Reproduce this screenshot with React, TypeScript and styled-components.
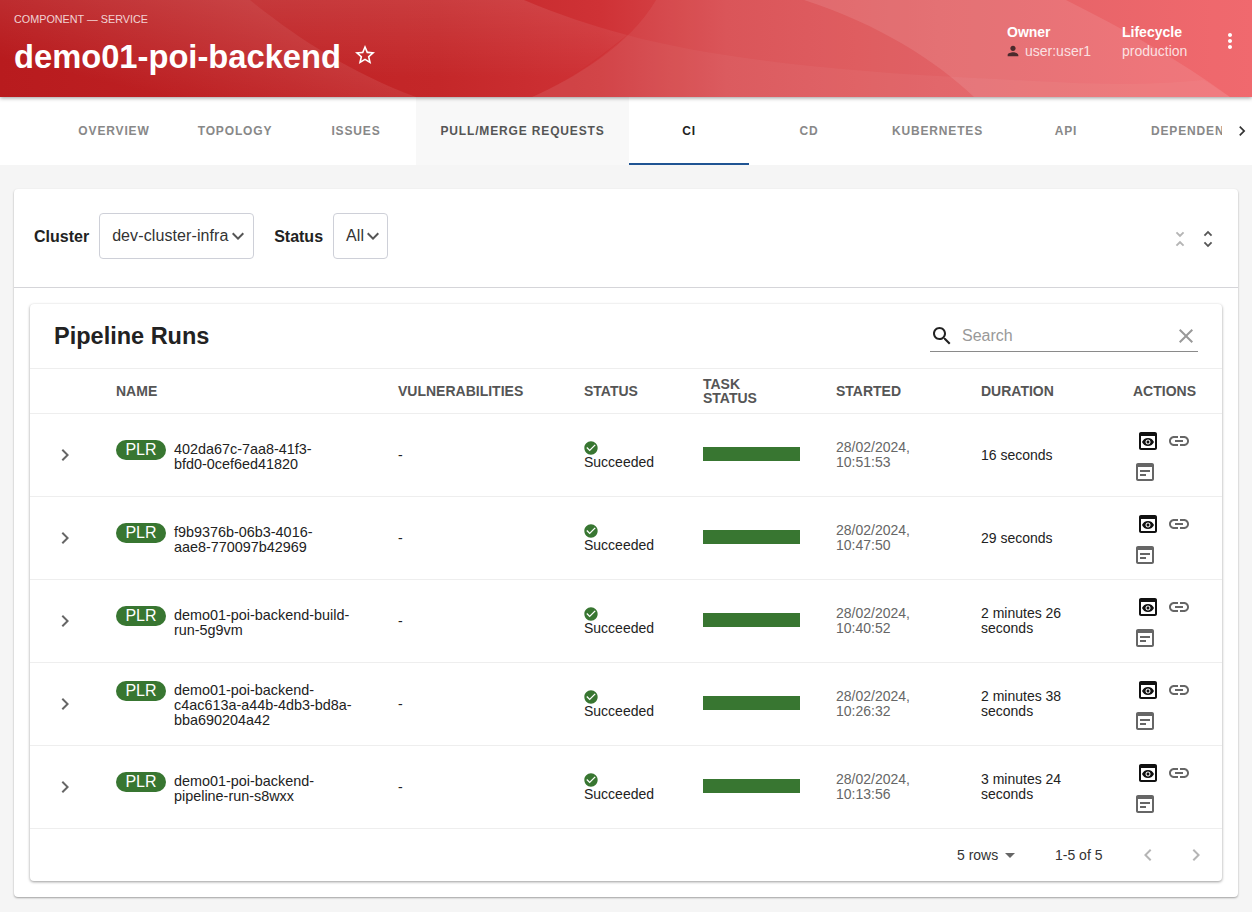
import React from 'react'
import styled, { createGlobalStyle } from 'styled-components'

const GlobalStyle = createGlobalStyle`
  html, body {
    margin: 0;
    padding: 0;
    height: 912px;
    overflow: hidden;
    background: #f5f5f5;
    font-family: "Liberation Sans", Arial, sans-serif;
  }
  * { box-sizing: border-box; }
`

const Page = styled.div`
  width: 1252px;
  height: 912px;
  display: flex;
  flex-direction: column;
`

const HeaderBar = styled.header`
  position: relative;
  height: 97px;
  flex: none;
  display: flex;
  justify-content: space-between;
  padding: 0 10px 0 14px;
  color: #fff;
  background: linear-gradient(90deg, #b81b1e 0%, #c42729 35%, #cf3236 48%, #d84b4f 58%, #e0585c 75%, #f06065 100%);
  box-shadow: 0 1px 4px rgba(0, 0, 0, 0.4);
  z-index: 2;
`

const Waves = styled.svg`
  position: absolute;
  left: 0;
  top: 0;
  width: 1252px;
  height: 97px;
`

const TitleBlock = styled.div`
  position: relative;
  padding-top: 12px;
`

const TypeLabel = styled.div`
  font-size: 10.8px;
  line-height: 14px;
  color: rgba(255, 255, 255, 0.8);
`

const TitleRow = styled.div`
  display: flex;
  align-items: center;
  gap: 12px;
  margin-top: 7px;
`

const Title = styled.h1`
  margin: 0;
  font-size: 32.7px;
  line-height: 48px;
  font-weight: 700;
`

const StarButton = styled.span`
  display: flex;
  margin-top: -4px;
`

const MetaBlock = styled.div`
  position: relative;
  display: flex;
  padding-top: 24px;
`

const Meta = styled.div<{ $width: number }>`
  width: ${p => p.$width}px;
`

const MetaLabel = styled.div`
  font-size: 14px;
  line-height: 16px;
  font-weight: 700;
`

const MetaValue = styled.div`
  display: flex;
  align-items: center;
  gap: 4px;
  height: 16px;
  margin-top: 3px;
  font-size: 14px;
  line-height: 16px;
  color: rgba(255, 255, 255, 0.8);
`

const OwnerIcon = styled.span`
  display: flex;
  margin-left: -2px;
`

const MoreButton = styled.div`
  width: 24px;
  margin-top: 5px;
`

const TabBar = styled.nav`
  height: 68px;
  flex: none;
  display: flex;
  background: #fff;
`

const TabScroller = styled.div`
  width: 1222px;
  padding-left: 54px;
  display: flex;
  overflow: hidden;
`

const Tab = styled.div<{ $width: number; $active?: boolean; $hover?: boolean }>`
  flex: none;
  width: ${p => p.$width}px;
  padding: 2px 24px 0;
  display: flex;
  align-items: center;
  justify-content: center;
  font-size: 12px;
  font-weight: 700;
  letter-spacing: 0.85px;
  white-space: nowrap;
  text-transform: uppercase;
  color: ${p => (p.$active ? '#222' : p.$hover ? '#555' : '#888')};
  background: ${p => (p.$hover ? '#f8f8f8' : 'transparent')};
  border-bottom: 2px solid ${p => (p.$active ? '#1f5493' : 'transparent')};
`

const ClippedTab = styled(Tab)`
  justify-content: flex-start;
  overflow: hidden;
  padding-left: 25px;
`

const TabArrow = styled.div`
  flex: 1;
  display: flex;
  align-items: center;
  justify-content: flex-end;
`

const Content = styled.main`
  flex: 1;
  padding: 24px 14px 15px;
`

const Card = styled.section`
  height: 708px;
  background: #fff;
  border-radius: 4px;
  box-shadow: 0 1px 2px rgba(0, 0, 0, 0.35);
`

const FilterRow = styled.div`
  height: 99px;
  display: flex;
  align-items: center;
  padding: 0 20px 2px;
  border-bottom: 1px solid #d5d5d9;
`

const FilterLabel = styled.label`
  font-size: 16px;
  font-weight: 700;
  color: #222;
  margin-right: 10px;
`

const SelectBox = styled.div<{ $width: number }>`
  width: ${p => p.$width}px;
  height: 46px;
  margin: 0 20px 2px 0;
  padding-left: 12px;
  display: flex;
  align-items: center;
  border: 1px solid #ced0d8;
  border-radius: 4px;
  font-size: 16px;
  letter-spacing: 0.1px;
  color: #333;
`

const SelectArrow = styled.span`
  display: flex;
  margin-left: -3px;
`

const FoldIcons = styled.div`
  margin: 3px -1px 0 auto;
  display: flex;
  gap: 6px;
`

const TableCard = styled.div`
  margin: 16px 16px 0;
  height: 577px;
  border-radius: 4px;
  background: #fff;
  box-shadow: 0 1px 3px rgba(0, 0, 0, 0.4);
`

const TableTitleRow = styled.div`
  height: 65px;
  display: flex;
  align-items: center;
  justify-content: space-between;
  padding: 0 24px;
  border-bottom: 1px solid #eee;
`

const TableTitle = styled.h2`
  margin: 0;
  font-size: 23.5px;
  font-weight: 700;
  color: #222;
`

const SearchBox = styled.div`
  width: 268px;
  height: 32px;
  display: flex;
  align-items: center;
  gap: 8px;
  border-bottom: 1px solid #8a8a8a;
  font-size: 16px;
  color: #999;
`

const SearchText = styled.span`
  flex: 1;
`

const columns = '70px 282px 186px 119px 133px 145px 152px 105px'

const HeadRow = styled.div`
  display: grid;
  grid-template-columns: ${columns};
  height: 45px;
  align-items: center;
  border-bottom: 1px solid #eee;
`

const HeadCell = styled.div`
  padding: 0 16px;
  font-size: 14px;
  line-height: 14px;
  font-weight: 700;
  color: #555;
  text-transform: uppercase;
  white-space: pre-line;
`

const Row = styled.div`
  display: grid;
  grid-template-columns: ${columns};
  height: 83px;
  align-items: center;
  border-bottom: 1px solid #eee;
`

const Cell = styled.div<{ $muted?: boolean }>`
  padding: 0 16px;
  font-size: 14px;
  line-height: 15px;
  color: ${p => (p.$muted ? '#666' : '#222')};
`

const ExpandCell = styled(Cell)`
  padding: 0 0 0 23px;
  display: flex;
`

const NameCell = styled(Cell)`
  display: flex;
  gap: 8px;
  align-items: flex-start;
  padding-top: 3px;
`

const Pill = styled.span`
  flex: none;
  width: 50px;
  height: 20px;
  margin-top: -2px;
  border-radius: 10px;
  background: #387631;
  color: #fff;
  font-size: 16px;
  line-height: 20px;
  text-align: center;
`

const RunName = styled.span`
  font-size: 14.4px;
  white-space: pre-line;
`

const StatusCell = styled(Cell)`
  display: flex;
  flex-direction: column;
  align-items: flex-start;
  padding-bottom: 1px;
`

const StatusIcon = styled.span`
  display: flex;
  height: 15px;
  margin-left: -1px;
`

const ProgressBar = styled.div`
  height: 14px;
  width: 97px;
  margin: 0 0 2px 16px;
  background: #387631;
`

const ActionCell = styled(Cell)`
  display: flex;
  flex-wrap: wrap;
  width: 105px;
  row-gap: 7px;
  padding-top: 2px;
`

const ActionIcon = styled.span<{ $offset?: number }>`
  display: flex;
  width: 24px;
  height: 24px;
  margin-left: ${p => p.$offset ?? 0}px;
`

const Footer = styled.div`
  height: 52px;
  display: flex;
  align-items: center;
  padding-left: 927px;
  font-size: 14px;
  color: #333;
`

const RowsSelect = styled.span`
  display: flex;
  align-items: center;
  width: 98px;
`

const PageCount = styled.span`
  width: 81px;
`

const PageArrows = styled.span`
  display: flex;
  gap: 24px;
`

const Icon = ({ d, size = 24, color = 'currentColor' }: { d: string; size?: number; color?: string }) => (
  <svg width={size} height={size} viewBox="0 0 24 24" fill={color} style={{ flex: 'none' }}>
    <path d={d} />
  </svg>
)

const paths = {
  star: 'M22 9.24l-7.19-.62L12 2 9.19 8.63 2 9.24l5.46 4.73L5.82 21 12 17.27 18.18 21l-1.63-7.03L22 9.24zM12 15.4l-3.76 2.27 1-4.28-3.32-2.88 4.38-.38L12 6.1l1.71 4.04 4.38.38-3.32 2.88 1 4.28L12 15.4z',
  person: 'M12 12c2.21 0 4-1.79 4-4s-1.79-4-4-4-4 1.79-4 4 1.79 4 4 4zm0 2c-2.67 0-8 1.34-8 4v2h16v-2c0-2.66-5.33-4-8-4z',
  more: 'M12 8c1.1 0 2-.9 2-2s-.9-2-2-2-2 .9-2 2 .9 2 2 2zm0 2c-1.1 0-2 .9-2 2s.9 2 2 2 2-.9 2-2-.9-2-2-2zm0 6c-1.1 0-2 .9-2 2s.9 2 2 2 2-.9 2-2-.9-2-2-2z',
  right: 'M10 6 8.59 7.41 13.17 12l-4.58 4.59L10 18l6-6z',
  left: 'M15.41 7.41 14 6l-6 6 6 6 1.41-1.41L10.83 12z',
  down: 'M7.41 8.59 12 13.17l4.59-4.58L18 10l-6 6-6-6z',
  less: 'M7.41 18.59 8.83 20 12 16.83 15.17 20l1.41-1.41L12 14l-4.59 4.59zm9.18-13.18L15.17 4 12 7.17 8.83 4 7.41 5.41 12 10l4.59-4.59z',
  more2: 'M12 5.83 15.17 9l1.41-1.41L12 3 7.41 7.59 8.83 9 12 5.83zm0 12.34L8.83 15l-1.41 1.41L12 21l4.59-4.59L15.17 15 12 18.17z',
  search: 'M15.5 14h-.79l-.28-.27C15.41 12.59 16 11.11 16 9.5 16 5.91 13.09 3 9.5 3S3 5.91 3 9.5 5.91 16 9.5 16c1.61 0 3.09-.59 4.23-1.57l.27.28v.79l5 4.99L20.49 19l-4.99-5zm-6 0C7.01 14 5 11.99 5 9.5S7.01 5 9.5 5 14 7.01 14 9.5 11.99 14 9.5 14z',
  close: 'M19 6.41 17.59 5 12 10.59 6.41 5 5 6.41 10.59 12 5 17.59 6.41 19 12 13.41 17.59 19 19 17.59 13.41 12z',
  check: 'M12 2C6.48 2 2 6.48 2 12s4.48 10 10 10 10-4.48 10-10S17.52 2 12 2zm-2 15-5-5 1.41-1.41L10 14.17l7.59-7.59L19 8l-9 9z',
  preview: 'M19 3H5c-1.11 0-2 .9-2 2v14c0 1.1.89 2 2 2h14c1.1 0 2-.9 2-2V5c0-1.1-.89-2-2-2zm0 16H5V7h14v12zm-5.5-6c0 .83-.67 1.5-1.5 1.5s-1.5-.67-1.5-1.5.67-1.5 1.5-1.5 1.5.67 1.5 1.5zM12 9c-2.73 0-5.06 1.66-6 4 .94 2.34 3.27 4 6 4s5.06-1.66 6-4c-.94-2.34-3.27-4-6-4zm0 6.5c-1.38 0-2.5-1.12-2.5-2.5s1.12-2.5 2.5-2.5 2.5 1.12 2.5 2.5-1.12 2.5-2.5 2.5z',
  link: 'M3.9 12c0-1.71 1.39-3.1 3.1-3.1h4V7H7c-2.76 0-5 2.24-5 5s2.24 5 5 5h4v-1.9H7c-1.71 0-3.1-1.39-3.1-3.1zM8 13h8v-2H8v2zm9-6h-4v1.9h4c1.71 0 3.1 1.39 3.1 3.1s-1.39 3.1-3.1 3.1h-4V17h4c2.76 0 5-2.24 5-5s-2.24-5-5-5z',
  log: 'M19 3H5c-1.1 0-2 .9-2 2v14c0 1.1.9 2 2 2h14c1.1 0 2-.9 2-2V5c0-1.1-.9-2-2-2zm0 16H5V7h14v12zM7 10h10v2H7zM7 14h6v2H7z',
  caret: 'M7 10l5 5 5-5z',
}

const tabs = [
  { label: 'Overview', width: 120 },
  { label: 'Topology', width: 122 },
  { label: 'Issues', width: 120 },
  { label: 'Pull/Merge Requests', width: 213, hover: true },
  { label: 'CI', width: 120, active: true },
  { label: 'CD', width: 120 },
  { label: 'Kubernetes', width: 137 },
  { label: 'API', width: 120 },
]

const runs = [
  { name: '402da67c-7aa8-41f3-\nbfd0-0cef6ed41820', started: '28/02/2024, 10:51:53', duration: '16 seconds' },
  { name: 'f9b9376b-06b3-4016-\naae8-770097b42969', started: '28/02/2024, 10:47:50', duration: '29 seconds' },
  { name: 'demo01-poi-backend-build-\nrun-5g9vm', started: '28/02/2024, 10:40:52', duration: '2 minutes 26 seconds' },
  { name: 'demo01-poi-backend-\nc4ac613a-a44b-4db3-bd8a-\nbba690204a42', started: '28/02/2024, 10:26:32', duration: '2 minutes 38 seconds' },
  { name: 'demo01-poi-backend-\npipeline-run-s8wxx', started: '28/02/2024, 10:13:56', duration: '3 minutes 24 seconds' },
]

const heads = ['', 'Name', 'Vulnerabilities', 'Status', 'Task\nStatus', 'Started', 'Duration', 'Actions']

function App() {
  return (
    <Page>
      <GlobalStyle />
      <HeaderBar>
        <Waves viewBox="0 0 1252 97">
          <defs>
            <linearGradient id="fadeA" x1="0" y1="1" x2="1" y2="0">
              <stop offset="0.2" stopColor="#fff" stopOpacity="0" />
              <stop offset="0.85" stopColor="#fff" stopOpacity="0.16" />
            </linearGradient>
            <linearGradient id="fadeB" x1="0" y1="0" x2="0" y2="1">
              <stop offset="0" stopColor="#fff" stopOpacity="0.1" />
              <stop offset="0.8" stopColor="#fff" stopOpacity="0" />
            </linearGradient>
          </defs>
          <path d="M0 0H250C300 40 350 72 416 97H0Z" fill="url(#fadeA)" />
          <path d="M250 0H524C560 15 590 25 627 35C590 65 560 85 532 97H416C350 72 300 40 250 0Z" fill="url(#fadeB)" />
          <path d="M532 97C575 78 630 45 656 0H1252V97Z" fill="#fff" fillOpacity="0.06" />
          <path d="M627 35C720 60 850 72 975 78C1060 82 1120 88 1204 80L1230 97H532C575 78 605 55 627 35Z" fill="#fff" fillOpacity="0.04" />
          <path d="M804 0C880 25 935 60 974 97H1230C1180 60 1125 30 1066 0Z" fill="#fff" fillOpacity="0.1" />
        </Waves>
        <TitleBlock>
          <TypeLabel>COMPONENT — SERVICE</TypeLabel>
          <TitleRow>
            <Title>demo01-poi-backend</Title>
            <StarButton>
              <Icon d={paths.star} />
            </StarButton>
          </TitleRow>
        </TitleBlock>
        <MetaBlock>
          <Meta $width={115}>
            <MetaLabel>Owner</MetaLabel>
            <MetaValue>
              <OwnerIcon>
                <Icon d={paths.person} size={16} color="#4a2a2c" />
              </OwnerIcon>
              user:user1
            </MetaValue>
          </Meta>
          <Meta $width={96}>
            <MetaLabel>Lifecycle</MetaLabel>
            <MetaValue>production</MetaValue>
          </Meta>
          <MoreButton>
            <Icon d={paths.more} />
          </MoreButton>
        </MetaBlock>
      </HeaderBar>

      <TabBar>
        <TabScroller>
          {tabs.map(t => (
            <Tab key={t.label} $width={t.width} $active={t.active} $hover={t.hover}>
              {t.label}
            </Tab>
          ))}
          <ClippedTab $width={120}>Dependencies</ClippedTab>
        </TabScroller>
        <TabArrow>
          <Icon d={paths.right} size={20} color="#333" />
        </TabArrow>
      </TabBar>

      <Content>
        <Card>
          <FilterRow>
            <FilterLabel>Cluster</FilterLabel>
            <SelectBox $width={155}>
              dev-cluster-infra
              <SelectArrow>
                <Icon d={paths.down} color="#555" />
              </SelectArrow>
            </SelectBox>
            <FilterLabel>Status</FilterLabel>
            <SelectBox $width={55}>
              All
              <SelectArrow>
                <Icon d={paths.down} color="#555" />
              </SelectArrow>
            </SelectBox>
            <FoldIcons>
              <Icon d={paths.less} size={22} color="#b5b5b5" />
              <Icon d={paths.more2} size={22} color="#555" />
            </FoldIcons>
          </FilterRow>

          <TableCard>
            <TableTitleRow>
              <TableTitle>Pipeline Runs</TableTitle>
              <SearchBox>
                <Icon d={paths.search} color="#222" />
                <SearchText>Search</SearchText>
                <Icon d={paths.close} size={24} color="#999" />
              </SearchBox>
            </TableTitleRow>

            <HeadRow>
              {heads.map(h => (
                <HeadCell key={h || 'expand'}>{h}</HeadCell>
              ))}
            </HeadRow>

            {runs.map(run => (
              <Row key={run.name}>
                <ExpandCell>
                  <Icon d={paths.right} color="#666" />
                </ExpandCell>
                <NameCell>
                  <Pill>PLR</Pill>
                  <RunName>{run.name}</RunName>
                </NameCell>
                <Cell>-</Cell>
                <StatusCell>
                  <StatusIcon>
                    <Icon d={paths.check} size={16} color="#387631" />
                  </StatusIcon>
                  Succeeded
                </StatusCell>
                <div>
                  <ProgressBar />
                </div>
                <Cell $muted>{run.started}</Cell>
                <Cell>{run.duration}</Cell>
                <ActionCell>
                  <ActionIcon $offset={3}>
                    <Icon d={paths.preview} color="#111" />
                  </ActionIcon>
                  <ActionIcon $offset={7}>
                    <Icon d={paths.link} color="#666" />
                  </ActionIcon>
                  <ActionIcon>
                    <Icon d={paths.log} color="#666" />
                  </ActionIcon>
                </ActionCell>
              </Row>
            ))}

            <Footer>
              <RowsSelect>
                5 rows
                <Icon d={paths.caret} size={24} color="#666" />
              </RowsSelect>
              <PageCount>1-5 of 5</PageCount>
              <PageArrows>
                <Icon d={paths.left} color="#b5b5b5" />
                <Icon d={paths.right} color="#b5b5b5" />
              </PageArrows>
            </Footer>
          </TableCard>
        </Card>
      </Content>
    </Page>
  )
}

export default App
